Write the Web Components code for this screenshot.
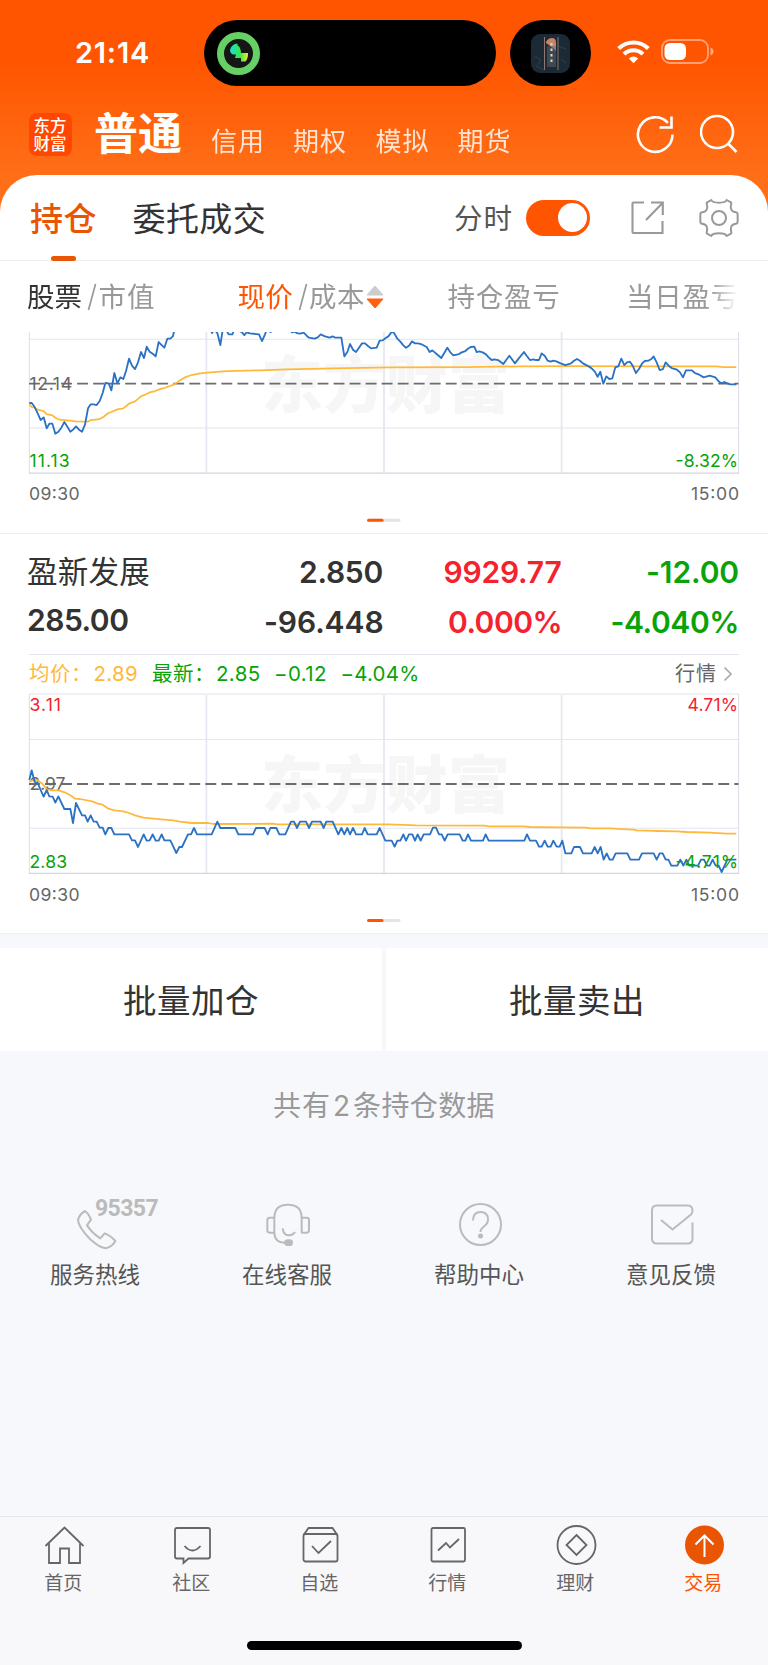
<!DOCTYPE html>
<html lang="zh-CN">
<head>
<meta charset="utf-8">
<title>持仓</title>
<style>
html,body{margin:0;padding:0}
body{width:768px;height:1665px;overflow:hidden;background:#f7f8fb;font-family:Inter,"Noto Sans CJK SC",sans-serif;color:#333;line-height:1}
</style>
</head>
<body>
<trade-page></trade-page>
<script>
const define = (name, html, setup) => customElements.define(name, class extends HTMLElement {
  connectedCallback() {
    if (this.shadowRoot) return;
    const root = this.attachShadow({ mode: 'open' });
    const t = document.createElement('template');
    t.innerHTML = typeof html === 'function' ? html(this) : html;
    root.append(t.content.cloneNode(true));
    if (setup) setup(this, root);
  }
});

/* Text run whose tracking is adjusted to an exact advance width */
define('fit-text', `<style>:host{display:block;flex:none;white-space:nowrap;line-height:1}span{display:inline-block;line-height:1}</style><span><slot></slot></span>`,
  (el, root) => {
    const w = +el.getAttribute('w'), s = root.querySelector('span');
    el.style.width = w + 'px';
    if (el.hasAttribute('x')) el.style.marginLeft = el.getAttribute('x') + 'px';
    const n = [...el.textContent].length;
    const nat = s.getBoundingClientRect().width;
    s.style.letterSpacing = ((w - nat) / n) + 'px';
  });

define('status-bar', `<style>
:host{display:flex;height:106px;align-items:center;color:#fff}
fit-text{font-size:29px;font-weight:600;margin-bottom:1.500px}
.island{display:flex;align-items:center;background:#000;height:66px;border-radius:33px;box-sizing:border-box;flex:none}
.a{width:292px;margin-left:54px;padding-left:13px}
.b{width:81px;margin-left:14px;padding-left:21px}
svg{display:block;flex:none}
.w{margin:0 0 3px 26px}.p{margin:0 0 3px 11px}
</style>
<fit-text x="75" w="75">21:14</fit-text>
<div class="island a"><svg width="43" height="43" viewBox="0 0 43 43"><defs><linearGradient id="g" x1="0" x2="1"><stop stop-color="#19e0d8"/><stop offset=".55" stop-color="#35e64a"/><stop offset="1" stop-color="#f2ee2c"/></linearGradient></defs><circle cx="21.500" cy="21.500" r="18" fill="#161616" stroke="#67d065" stroke-width="7"/><path d="M20.500 11.500v2q3 .5 3.500 7.500h7q0 6-2.500 8.500h-4.500v-3.500h-6l1-3.500h-3q-3-1.500-3-4.500 1.500-6 7.500-6.500z" fill="url(#g)"/></svg></div>
<div class="island b"><svg width="39" height="39" viewBox="0 0 39 39"><rect width="39" height="39" rx="9" fill="#1b2a35"/><path d="M4 22l6 4-3 5M30 25l5 4M5 32l8 4M27 12l8 3" stroke="#30424d" fill="none"/><path d="M13.500 3v33M27 3v33" stroke="#8d7670" stroke-width="1"/><path d="M15 8q2-4 6-4 4 0 4 5v8l-3-3-7-5z" fill="#c98468"/><rect x="16" y="12" width="9" height="21" fill="#64676a" opacity=".5"/><path d="M20.500 9v20" stroke="#ddd3cc" stroke-width="2" stroke-dasharray="2.500 3"/></svg></div>
<svg class="w" width="33" height="24" viewBox="0 0 33 24" fill="none" stroke="#fff" stroke-width="4.200"><path d="M1.700 8.600a21 21 0 0 1 29.600 0"/><path d="M7 14.200a13.400 13.400 0 0 1 19 0" stroke-width="4"/><path d="M16.500 23.300l-4.600-4.800a6.500 6.500 0 0 1 9.200 0z" fill="#fff" stroke="none"/></svg>
<svg class="p" width="54" height="25" viewBox="0 0 54 25"><rect x="1" y="1" width="46" height="23" rx="8" fill="none" stroke="#fff" stroke-opacity=".45" stroke-width="1.800"/><rect x="3.500" y="4" width="21.500" height="17" rx="5.500" fill="#fff"/><path d="M49.500 8.500q3 1.200 3 4t-3 4z" fill="#fff" fill-opacity=".5"/></svg>`);

define('account-nav', `<style>
:host{display:flex;height:69px;color:#fff;align-items:flex-start}
.logo{display:grid;place-content:center;justify-items:center;width:43px;height:43px;margin:7px 0 0 28.500px;border-radius:8px;background:#ff4703;box-sizing:border-box;font-weight:500;font-size:16.500px;row-gap:1px;padding-top:1px;flex:none}
.m{font-size:44px;font-weight:700;margin-top:6px}
.s{font-size:26px;opacity:.82;margin-top:23px}
svg{display:block;flex:none;margin-top:8px}
</style>
<div class="logo"><fit-text w="33">东方</fit-text><fit-text w="33">财富</fit-text></div>
<fit-text class="m" x="22.500" w="88">普通</fit-text>
<fit-text class="s" x="29" w="54">信用</fit-text><fit-text class="s" x="28" w="54">期权</fit-text><fit-text class="s" x="28.500" w="54">模拟</fit-text><fit-text class="s" x="28" w="54">期货</fit-text>
<svg style="margin-left:124.500px" width="39" height="42" viewBox="0 0 39 42" fill="none" stroke="#fff" stroke-width="2.600"><path d="M36.500 20.500a17.300 17.300 0 1 1-4.600-11.700"/><path d="M35.500 2.500v11h-12" /></svg>
<svg style="margin-left:24.500px" width="39" height="42" viewBox="0 0 39 42" fill="none" stroke="#fff" stroke-width="2.600"><circle cx="17" cy="18" r="16"/><path d="M28 29.500l8.500 8.500"/></svg>`);

define('position-tabs', `<style>
:host{display:flex;height:85px;align-items:center;border-bottom:1px solid #efefef;position:relative}
.t{font-size:33px;margin-top:4px}.on{font-weight:500;color:#ea5504}
.f{font-size:28.500px;color:#555;margin-top:4px}
.bar{position:absolute;left:51px;top:80.500px;width:25px;height:5px;border-radius:2.500px;background:#ea5504}
.sw{width:64.500px;height:36px;border-radius:18px;background:#ff5500;margin-left:12.500px;display:flex;justify-content:flex-end;align-items:center;box-sizing:border-box;padding-right:3.500px;flex:none}
.sw i{width:29px;height:29px;border-radius:50%;background:#fff}
svg{display:block;flex:none}
</style>
<fit-text class="t on" x="30" w="67">持仓</fit-text><fit-text class="t" x="35.500" w="133.500">委托成交</fit-text>
<fit-text class="f" x="188" w="59">分时</fit-text>
<div class="sw"><i></i></div>
<svg style="margin-left:41px" width="34" height="34" viewBox="0 0 34 34" fill="none" stroke="#999" stroke-width="2.100"><path d="M13 1.500H2.500a1 1 0 0 0-1 1v28.500a1 1 0 0 0 1 1h29V20M20 1.500h11.800v12.500M31.500 2L15 19"/></svg>
<svg style="margin-left:34px" width="40" height="40" viewBox="-60 -60 120 120" fill="none" stroke="#999" stroke-width="6" stroke-linejoin="round"><path d="M-23,-54 Q-20,-46 0,-46 Q20,-46 23,-54 L37,-46 Q30,-19 51,-17 Q56,-17 56,-9 V9 Q56,17 51,17 Q30,19 37,46 L23,54 Q20,46 0,46 Q-20,46 -23,54 L-37,46 Q-30,19 -51,17 Q-56,17 -56,9 V-9 Q-56,-17 -51,-17 Q-30,-19 -37,-46Z"/><circle r="21"/></svg>
<div class="bar"></div>`);

define('column-heads', `<style>
:host{display:flex;height:71px;align-items:center;font-size:27.500px;color:#999;-webkit-mask-image:linear-gradient(90deg,#000 710px,transparent 738px);mask-image:linear-gradient(90deg,#000 710px,transparent 738px)}
.k{color:#333}.o{color:#ff5500}
fit-text{margin-top:2px}
svg{display:block;flex:none}
</style>
<fit-text class="k" x="27" w="55">股票</fit-text><svg style="margin-left:5px" width="10" height="28" viewBox="0 0 10 28"><path d="M8.500 1L1.500 27" stroke="#999" stroke-width="1.700"/></svg><fit-text x="1.500" w="57">市值</fit-text>
<fit-text class="o" x="82" w="55.500">现价</fit-text><svg style="margin-left:4.500px" width="10" height="28" viewBox="0 0 10 28"><path d="M8.500 1L1.500 27" stroke="#999" stroke-width="1.700"/></svg><fit-text x="1.500" w="56">成本</fit-text>
<svg style="margin-left:1px" width="18" height="24" viewBox="0 0 18 24"><path d="M9 1l8 9H1z" fill="#ccc" stroke="#ccc" stroke-linejoin="round"/><path d="M9 23l8-9H1z" fill="#ff6110" stroke="#ff6110" stroke-linejoin="round"/></svg>
<fit-text x="63.500" w="113">持仓盈亏</fit-text><fit-text x="65.500" w="113">当日盈亏</fit-text>`);

const SERIES = {
  first: {
    avg: '88,254 95,262 104,264 113,270 131,274 140,283 157,287 166,294 178,300 193,301 210,303 228,305 264,306 272,301 299,298 311,291 325,280 334,277 352,269 370,266 387,252 405,245 423,230 440,223 449,218 466,214 484,207 493,205 523,194 540,182 555,173 575,166 600,161 640,157 680,154 780,152 860,149 1000,146 1170,143 1400,142 1560,140 1700,139 2000,140 2150,140 2170,142 2209,142',
    price: '88,250 95,250 104,262 113,281 122,301 131,293 140,326 148,312 157,312 166,342 175,336 184,324 193,307 202,321 211,336 220,329 228,320 237,330 246,336 255,315 264,266 272,254 281,254 290,256 299,244 308,220 316,190 326,191 334,212 343,160 352,191 361,173 370,178 378,154 387,117 396,138 405,148 414,128 423,97 432,115 440,81 449,96 458,102 467,110 476,67 485,76 493,84 502,57 511,57 519,49 523,30 530,10 620,10 628,20 636,40 643,30 652,40 661,76 669,25 678,30 686,44 697,44 703,30 717,33 726,38 733,46 740,38 750,41 777,44 786,64 795,44 800,30 812,37 820,28 868,30 876,38 885,36 890,40 900,42 911,39 920,48 927,54 944,57 953,53 962,44 975,50 989,54 998,50 1006,54 1024,54 1033,110 1042,97 1050,73 1059,90 1068,97 1077,84 1086,71 1095,71 1104,79 1113,86 1130,84 1139,63 1148,62 1157,55 1165,50 1174,38 1181,38 1192,57 1201,66 1210,77 1218,84 1227,78 1236,65 1245,71 1254,71 1263,73 1280,82 1289,97 1297,92 1324,115 1342,84 1351,98 1360,107 1377,103 1385,98 1396,94 1404,87 1412,82 1423,81 1430,97 1438,95 1448,98 1458,104 1466,113 1475,121 1483,119 1494,121 1510,133 1528,108 1537,120 1545,131 1554,119 1572,97 1580,108 1590,121 1600,119 1608,121 1617,121 1625,101 1634,108 1643,123 1652,126 1660,123 1669,125 1682,131 1696,136 1713,131 1722,123 1731,118 1740,123 1749,131 1766,140 1775,146 1784,155 1793,171 1801,156 1810,192 1819,170 1828,178 1837,176 1846,143 1855,140 1864,117 1873,136 1881,128 1890,126 1899,140 1908,160 1917,148 1926,132 1934,124 1945,123 1954,118 1961,110 1970,128 1979,151 1989,148 1997,128 2006,138 2015,145 2031,150 2040,158 2049,173 2058,152 2076,152 2085,160 2094,163 2111,173 2129,168 2146,173 2155,184 2164,191 2173,187 2182,191 2191,194 2209,194'
  },
  second: {
    avg: '88,306 100,300 111,300 128,312 140,328 157,331 175,331 197,338 211,346 225,356 240,357 277,364 293,371 308,374 325,386 343,391 370,394 387,399 405,406 430,413 484,418 520,421 540,425 575,429 625,429 640,432 820,431 830,433 1165,433 1250,436 1455,437 1465,439 1570,439 1590,441 1685,442 1760,443 1770,445 1830,445 1880,448 1900,449 1910,451 1940,452 1975,453 2030,454 2060,456 2130,458 2180,461 2209,461',
    price: '88,300 95,271 104,306 113,309 122,330 131,350 140,330 148,349 158,350 166,368 175,349 193,387 211,387 219,429 228,369 246,406 255,406 263,425 272,406 281,425 290,425 299,443 308,443 316,463 325,444 334,444 343,463 387,463 396,481 405,481 414,501 431,463 440,482 449,481 458,463 467,482 476,482 485,463 493,481 511,481 529,519 538,501 546,501 564,463 573,463 582,444 591,463 635,463 652,425 661,444 706,444 715,463 759,463 768,444 794,444 803,463 811,444 829,444 838,463 856,463 873,425 882,425 891,444 900,425 918,425 927,444 936,425 962,425 971,444 979,425 998,425 1015,463 1024,444 1033,463 1042,444 1050,463 1059,444 1068,463 1086,463 1094,444 1103,463 1130,463 1139,444 1156,482 1175,482 1184,500 1192,482 1201,482 1210,463 1218,482 1227,463 1237,463 1245,482 1253,463 1262,482 1271,463 1290,463 1299,443 1308,443 1317,463 1325,463 1334,482 1343,463 1379,463 1388,482 1396,482 1404,463 1413,482 1449,482 1457,463 1466,482 1573,482 1581,463 1590,482 1608,482 1617,500 1625,500 1634,482 1643,500 1652,500 1660,482 1670,500 1679,500 1687,482 1696,520 1714,520 1722,501 1740,501 1749,520 1775,520 1784,501 1793,520 1802,501 1811,539 1820,520 1829,539 1838,539 1847,520 1882,520 1891,539 1917,539 1926,520 1961,520 1970,539 1979,520 1988,520 1997,539 2005,539 2014,557 2032,557 2041,539 2050,557 2059,539 2068,557 2094,557 2103,539 2112,539 2121,557 2129,557 2138,539 2147,557 2156,557 2165,576 2182,539 2209,539'
  }
};

/* Intraday chart; "cut" hides that many pixels at its head, as when scrolled under the column heads */
define('trend-chart', el => {
  const s = SERIES[el.getAttribute('series')], cut = +el.getAttribute('cut') || 0;
  const v = k => el.getAttribute(k);
  const h = 240 - cut;
  return `<style>:host{display:block;height:${h}px}svg{display:block;overflow:hidden}text{font-family:Inter,"Noto Sans CJK SC",sans-serif;font-size:17.600px}</style>
<svg width="768" height="${h}" viewBox="0 ${cut} 768 ${h}">
<text x="261" y="115" textLength="249" font-weight="900" style="font-family:'Noto Sans CJK SC',sans-serif;font-size:62px" fill="#f6f6f7">东方财富</text>
<path d="M29 1H739" stroke="#ebecf0" stroke-width="1.300"/>
<path d="M29 46.500H739M29 135.300H739" stroke="#e4e6f0" stroke-width="1.100"/>
<path d="M206.400 2V180M384 2V180M561.600 2V180" stroke="#e4e7f0" stroke-width="1.700"/>
<path d="M29.300 1V180.300M738.600 1V180.300" stroke="#dcdee6" stroke-width="1"/>
<path d="M29 180.400H739" stroke="#d3d6de" stroke-width="1.300"/>
<path d="M29 91H738.500" stroke="#6c6c6c" stroke-width="1.800" stroke-dasharray="10.900 5.130"/>
<text x="29.500" y="97" fill="#666" textLength="${v('mid-w')}">${v('mid')}</text>
<g transform="translate(0,${v('dy')}) scale(.333333)" fill="none" stroke-linejoin="round"><polyline points="${s.avg}" stroke="#ffb93a" stroke-width="5.300"/><polyline points="${s.price}" stroke="#2b72c4" stroke-width="5.500"/></g>
${cut ? '' : `<text x="29.500" y="18" fill="#f5222d" textLength="31.500">${v('top')}</text><text x="738" y="18" text-anchor="end" fill="#f5222d" textLength="50.500">${v('top-pct')}</text>`}
<text x="29.500" y="174.800" fill="#09a309" textLength="${v('low-w')}">${v('low')}</text>
<text x="738" y="174.800" text-anchor="end" fill="#09a309" textLength="62.500">${v('low-pct')}</text>
<text x="29" y="207.500" textLength="50.500" fill="#666">09:30</text>
<text x="739" y="207.500" text-anchor="end" textLength="48" fill="#666">15:00</text>
<rect x="370" y="226" width="30.500" height="3" rx="1.500" fill="#e4e4e6"/><rect x="367" y="226" width="16.500" height="3" rx="1.500" fill="#ff5500"/>
</svg>`;
});

define('stock-row', `<style>
:host{display:grid;grid-template-rows:50px 50px;padding:13.500px 0 7px;font-size:30px;font-weight:600;border-bottom:1px solid #e3e5ec;margin:0 29px}
.r{display:flex;align-items:center;margin:0 -29px}
.n{font-weight:400;font-size:30.500px}.up{color:#f5222d}.dn{color:#09a309}
.l{margin-bottom:4px}
</style>
<div class="r"><fit-text class="n" x="27" w="123">盈新发展</fit-text><fit-text x="149" w="84">2.850</fit-text><fit-text class="up" x="60.500" w="118">9929.77</fit-text><fit-text class="dn" x="84.500" w="93">-12.00</fit-text></div>
<div class="r"><fit-text class="l" x="27" w="101.500">285.00</fit-text><fit-text x="135.500" w="119.500">-96.448</fit-text><fit-text class="up" x="64.500" w="114">0.000%</fit-text><fit-text class="dn" x="48.500" w="128.500">-4.040%</fit-text></div>`);

define('quote-line', `<style>
:host{display:flex;height:38px;align-items:center;font-size:20.500px;color:#09a309}
.y{color:#ffb93a}.g{color:#666;font-size:20px}svg{display:block;flex:none}
</style>
<fit-text class="y" x="29" w="63">均价：</fit-text><fit-text class="y" x="1.500" w="44.500">2.89</fit-text>
<fit-text x="14" w="63">最新：</fit-text><fit-text x="1" w="44.500">2.85</fit-text><fit-text x="13.500" w="53">−0.12</fit-text><fit-text x="13.500" w="79">−4.04%</fit-text>
<fit-text class="g" x="255.500" w="42">行情</fit-text><svg style="margin-left:6px" width="10" height="16" viewBox="0 0 10 16"><path d="M1.500 1.500l6.500 6.500-6.500 6.500" fill="none" stroke="#aaa" stroke-width="1.700"/></svg>`);

define('batch-actions', `<style>
:host{display:grid;grid-template-columns:1fr 1fr;column-gap:4px;height:103px;margin-top:14px;background:#f7f8fb}
div{background:#fff;display:flex;align-items:center;font-size:33.500px}
fit-text{margin-top:4px}
</style><div><fit-text x="123" w="136">批量加仓</fit-text></div><div><fit-text x="123" w="136">批量卖出</fit-text></div>`);

const HELP = {
  phone: '<svg width="192" height="60" viewBox="0 3 192 60" stroke-width="6"><g transform="translate(60,0) scale(.33333)"><path d="M54 92Q60 74 75 66Q86 74 93 92L81 109Q96 132 121 148L134 133Q151 139 166 156Q158 172 138 178Q118 176 90 150Q54 112 54 92Z" stroke-linejoin="round"/></g></svg><fit-text class="no" w="63">95357</fit-text>',
  headset: '<svg width="192" height="60" viewBox="396 6 576 180" stroke-width="6"><path d="M643 130V84Q643 44 684 44Q725 44 725 84V130M643 83H629Q622 83 622 90V121Q622 128 629 128H643M725 83H740Q747 83 747 90V121Q747 128 740 128H725M643 128Q644 158 676 158M668 115Q670 136 687 136Q700 135 705 126"/><rect x="676" y="151" width="20" height="14" rx="7" fill="#bbb"/></svg>',
  question: '<svg width="192" height="60" viewBox="0 2.500 192 60" stroke-width="2"><circle cx="96.500" cy="35" r="20.500"/><path d="M89 31q0-8.500 7.500-8.500t7.500 7.500q0 4-4 7-3.500 2.500-3.500 5.500"/><circle cx="96.500" cy="46.500" r="1.500" fill="#bbb"/></svg>',
  mail: '<svg width="192" height="60" viewBox="0 2 192 60" stroke-width="2"><path d="M116.500 32.500V48.500q0 5-5 5H81q-5 0-5-5V20.500q0-5 5-5h31q4.500 0 4.500 5.500 0 2-1.500 3.500L96.500 39.500 85 30"/></svg>'
};
define('help-link', el => `<style>
:host{display:flex;flex-direction:column;align-items:center;height:100px;color:#555;font-size:22.500px;position:relative}
svg{display:block;fill:none;stroke:#bbb;flex:none}
.t{margin-top:12px}
.no{position:absolute;left:95px;top:4.500px;font:700 23px Roboto,sans-serif;color:#bbb;line-height:1}
</style>${HELP[el.getAttribute('icon')]}<fit-text class="t" w="92"><slot></slot></fit-text>`);

const TAB = {
  home: '<path d="M1.500 21L20.500 2.500 39.500 21M5 18.500V38H16V23.500H25V38H36V18.500"/>',
  chat: '<path d="M5 3H36q2 0 2 2V31.500q0 2-2 2H16.500L11.500 38V33.500H5q-2 0-2-2V5q0-2 2-2z"/><path d="M12.500 21q8 9 16 0"/>',
  pick: '<rect x="3.500" y="9" width="34" height="27.500" rx="2"/><path d="M4 9.500L8.500 3H32.500L37 9.500M12 21l6.500 7L31 16"/>',
  trend: '<rect x="3.500" y="3" width="33.500" height="33.500" rx="1.500"/><path d="M10 25.500l8-7.500 4 4.500L31 14"/>',
  coin: '<circle cx="20.500" cy="20" r="19"/><path d="M20.500 10L30.500 20 20.500 30 10.500 20z"/>',
  trade: '<circle cx="20.500" cy="20" r="19.500" fill="#ea5504" stroke="none"/><path d="M20.500 32V11M11.500 19.500L20.500 10.500 29.500 19.500" stroke="#fff" stroke-width="2"/>'
};
define('tab-item', el => `<style>
:host{display:flex;flex-direction:column;align-items:center;color:#666;font-size:19px;padding-top:8px}
:host([active]){color:#ff5500}
svg{display:block;margin-bottom:8px}
fit-text{margin-right:1px}
</style><svg width="41" height="41" viewBox="0 0 41 41" fill="none" stroke="#666" stroke-width="1.800">${TAB[el.getAttribute('icon')]}</svg><fit-text w="38.500"><slot></slot></fit-text>`);

define('trade-page', `<style>
:host{display:flex;flex-direction:column;width:768px;height:1665px;background:#f7f8fb}
header{background:linear-gradient(#ff5500 0,#ff5500 60px,#ff6f18 175px,#ff6f18 100%);flex:none}
.card{background:#fff;border-radius:37px 37px 0 0;flex:none}
.sep{height:1px;background:#efeff1}
.note{display:flex;justify-content:center;align-items:center;height:108px;font-size:28px;color:#999;flex:none;box-sizing:border-box;padding-top:2px}
.help{display:grid;grid-template-columns:repeat(4,1fr);margin-top:33px}
.tabs{display:grid;grid-template-columns:repeat(6,1fr);margin-top:auto;height:149px;border-top:1px solid #e6e6e8;background:#f8f8fb;align-content:start;position:relative;flex:none;box-sizing:border-box}
.bar{position:absolute;left:246.500px;bottom:15px;width:275px;height:9px;border-radius:4.500px;background:#000}
</style>
<header><status-bar></status-bar><account-nav></account-nav>
<div class="card"><position-tabs></position-tabs><column-heads></column-heads>
<trend-chart series="first" cut="39.3" dy="27" mid="12.14" mid-w="42.5" low="11.13" low-w="40" low-pct="-8.32%"></trend-chart>
<div class="sep"></div>
<stock-row></stock-row><quote-line></quote-line>
<trend-chart series="second" dy="-13" top="3.11" top-pct="4.71%" mid="2.97" mid-w="36" low="2.83" low-w="37.5" low-pct="-4.71%"></trend-chart>
<div class="sep"></div></div></header>
<batch-actions></batch-actions>
<div class="note"><fit-text w="58">共有</fit-text><fit-text x="2" w="19">2</fit-text><fit-text x="1" w="142">条持仓数据</fit-text></div>
<div class="help"><help-link icon="phone">服务热线</help-link><help-link icon="headset">在线客服</help-link><help-link icon="question">帮助中心</help-link><help-link icon="mail">意见反馈</help-link></div>
<div class="tabs"><tab-item icon="home">首页</tab-item><tab-item icon="chat">社区</tab-item><tab-item icon="pick">自选</tab-item><tab-item icon="trend">行情</tab-item><tab-item icon="coin">理财</tab-item><tab-item icon="trade" active>交易</tab-item><div class="bar"></div></div>`);
</script>
</body>
</html>
